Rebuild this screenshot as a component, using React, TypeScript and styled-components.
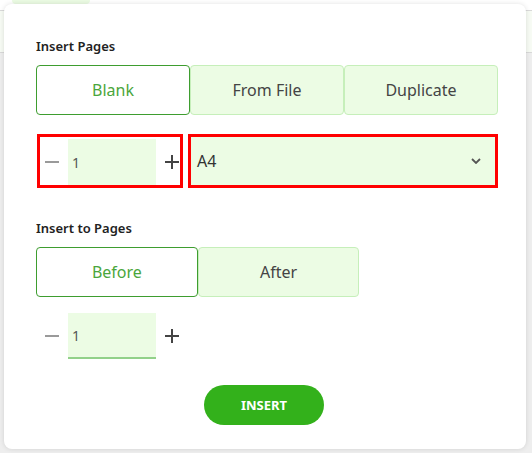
import React, { useState } from 'react';
import styled, { createGlobalStyle } from 'styled-components';

const PAGE_TYPES = ['Blank', 'From File', 'Duplicate'];
const POSITIONS = ['Before', 'After'];

interface IStepperProps {
  value: number;
  onChange: (v: number) => void;
  marked?: boolean;
}

function Stepper({ value, onChange, marked = false }: IStepperProps) {
  return (
    <StepperBox $marked={marked}>
      <StepButton $w={28} $align="flex-start" onClick={() => onChange(Math.max(1, value - 1))}>
        <svg width="14" height="14" viewBox="0 0 14 14">
          <path d="M0 7h14" stroke="#9a9a9a" strokeWidth="2" />
        </svg>
      </StepButton>
      <NumberInput
        $underline={!marked}
        value={value}
        onChange={(e) => onChange(Number(e.target.value) || 1)}
      />
      <StepButton $w={24} $align="flex-end" onClick={() => onChange(value + 1)}>
        <svg width="14" height="14" viewBox="0 0 14 14">
          <path d="M0 7h14M7 0v14" stroke="#444" strokeWidth="2" />
        </svg>
      </StepButton>
    </StepperBox>
  );
}

function App() {
  const [pageType, setPageType] = useState('Blank');
  const [position, setPosition] = useState('Before');
  const [count, setCount] = useState(1);
  const [target, setTarget] = useState(1);

  return (
    <>
      <GlobalStyle />
      <Screen>
        <TopStrip>
          <Pill />
        </TopStrip>
        <ToolRow />

        <Dialog>
          <Label>Insert Pages</Label>
          <TabGroup $width="100%">
            {PAGE_TYPES.map((t) => (
              <Tab key={t} $active={pageType === t} onClick={() => setPageType(t)}>
                {t}
              </Tab>
            ))}
          </TabGroup>

          <Row $mt={22}>
            <Stepper value={count} onChange={setCount} marked />
            <SelectBox>
              <span>A4</span>
              <svg width="10" height="6" viewBox="0 0 10 6">
                <path d="M1 1l4 4 4-4" stroke="#555" strokeWidth="1.8" fill="none" />
              </svg>
            </SelectBox>
          </Row>

          <Label $mt={34}>Insert to Pages</Label>
          <TabGroup $width="70%">
            {POSITIONS.map((p) => (
              <Tab key={p} $active={position === p} onClick={() => setPosition(p)}>
                {p}
              </Tab>
            ))}
          </TabGroup>

          <Row $mt={14}>
            <Stepper value={target} onChange={setTarget} />
          </Row>

          <Footer>
            <InsertButton>INSERT</InsertButton>
          </Footer>
        </Dialog>
      </Screen>
    </>
  );
}

export default App;

const GlobalStyle = createGlobalStyle`
  html, body {
    margin: 0;
    padding: 0;
  }
  body {
    width: 532px;
    height: 453px;
    overflow: hidden;
    background: #eeeeee;
    font-family: 'Noto Sans', 'Liberation Sans', sans-serif;
  }
  * {
    box-sizing: border-box;
  }
`;

const Screen = styled.div`
  position: relative;
  width: 532px;
  height: 453px;
`;

const TopStrip = styled.div`
  height: 11px;
  background: #fff;
  border-bottom: 1px solid #d9d9d9;
`;

const Pill = styled.div`
  width: 78px;
  height: 4px;
  margin-left: 12px;
  background: #ebfbe3;
  border-radius: 0 0 10px 10px;
`;

const ToolRow = styled.div`
  height: 42px;
  background: #f7fbf4;
  border-bottom: 1px solid #d9d9d9;
`;

const Dialog = styled.div`
  position: absolute;
  left: 4px;
  top: 4px;
  width: 522px;
  height: 445px;
  padding: 33px 28px 24px 32px;
  background: #fff;
  border-radius: 8px;
  box-shadow: 0 0 5px rgba(0, 0, 0, 0.12);
  display: flex;
  flex-direction: column;
`;

const Label = styled.div<{ $mt?: number }>`
  margin-top: ${(p) => p.$mt ?? 0}px;
  margin-bottom: 10px;
  font-size: 13px;
  line-height: 18px;
  font-weight: 600;
  color: #222;
`;

const TabGroup = styled.div<{ $width: string }>`
  display: flex;
  width: ${(p) => p.$width};
`;

const Tab = styled.button<{ $active: boolean }>`
  flex: 1;
  height: 50px;
  padding: 0;
  border: 1px solid ${(p) => (p.$active ? '#3e9d2f' : '#c6efba')};
  border-radius: 4px;
  background: ${(p) => (p.$active ? '#fff' : '#ecfce4')};
  color: ${(p) => (p.$active ? '#4aa63c' : '#444')};
  font-family: inherit;
  font-size: 16px;
  cursor: pointer;
`;

const Row = styled.div<{ $mt: number }>`
  display: flex;
  gap: 11px;
  margin-top: ${(p) => p.$mt}px;
  margin-left: 4px;
`;

const StepperBox = styled.div<{ $marked: boolean }>`
  display: flex;
  width: 140px;
  height: 48px;
  padding-top: 2px;
  outline: ${(p) => (p.$marked ? '3px solid #ff0000' : 'none')};
`;

const StepButton = styled.button<{ $w: number; $align: string }>`
  display: flex;
  align-items: center;
  justify-content: ${(p) => p.$align};
  width: ${(p) => p.$w}px;
  padding: 0 ${(p) => (p.$align === 'flex-end' ? 1 : 0)}px 0 ${(p) => (p.$align === 'flex-start' ? 5 : 0)}px;
  border: none;
  background: transparent;
  cursor: pointer;
`;

const NumberInput = styled.input<{ $underline: boolean }>`
  width: 88px;
  height: 46px;
  padding: 0 0 0 4px;
  border: none;
  border-bottom: ${(p) => (p.$underline ? '2px solid #92d18a' : 'none')};
  background: #ecfce4;
  color: #555;
  font-family: inherit;
  font-size: 14px;
  outline: none;
`;

const SelectBox = styled.div`
  display: flex;
  align-items: center;
  justify-content: space-between;
  width: 304px;
  height: 48px;
  padding: 0 14px 0 6px;
  background: #ecfce4;
  outline: 3px solid #ff0000;
  color: #333;
  font-size: 16px;
  cursor: pointer;
`;

const Footer = styled.div`
  display: flex;
  justify-content: center;
  margin-top: 26px;
  padding-right: 6px;
`;

const InsertButton = styled.button`
  width: 120px;
  height: 40px;
  border: none;
  border-radius: 20px;
  background: #33b11b;
  color: #fff;
  font-family: inherit;
  font-size: 13px;
  font-weight: 700;
  cursor: pointer;
`;
